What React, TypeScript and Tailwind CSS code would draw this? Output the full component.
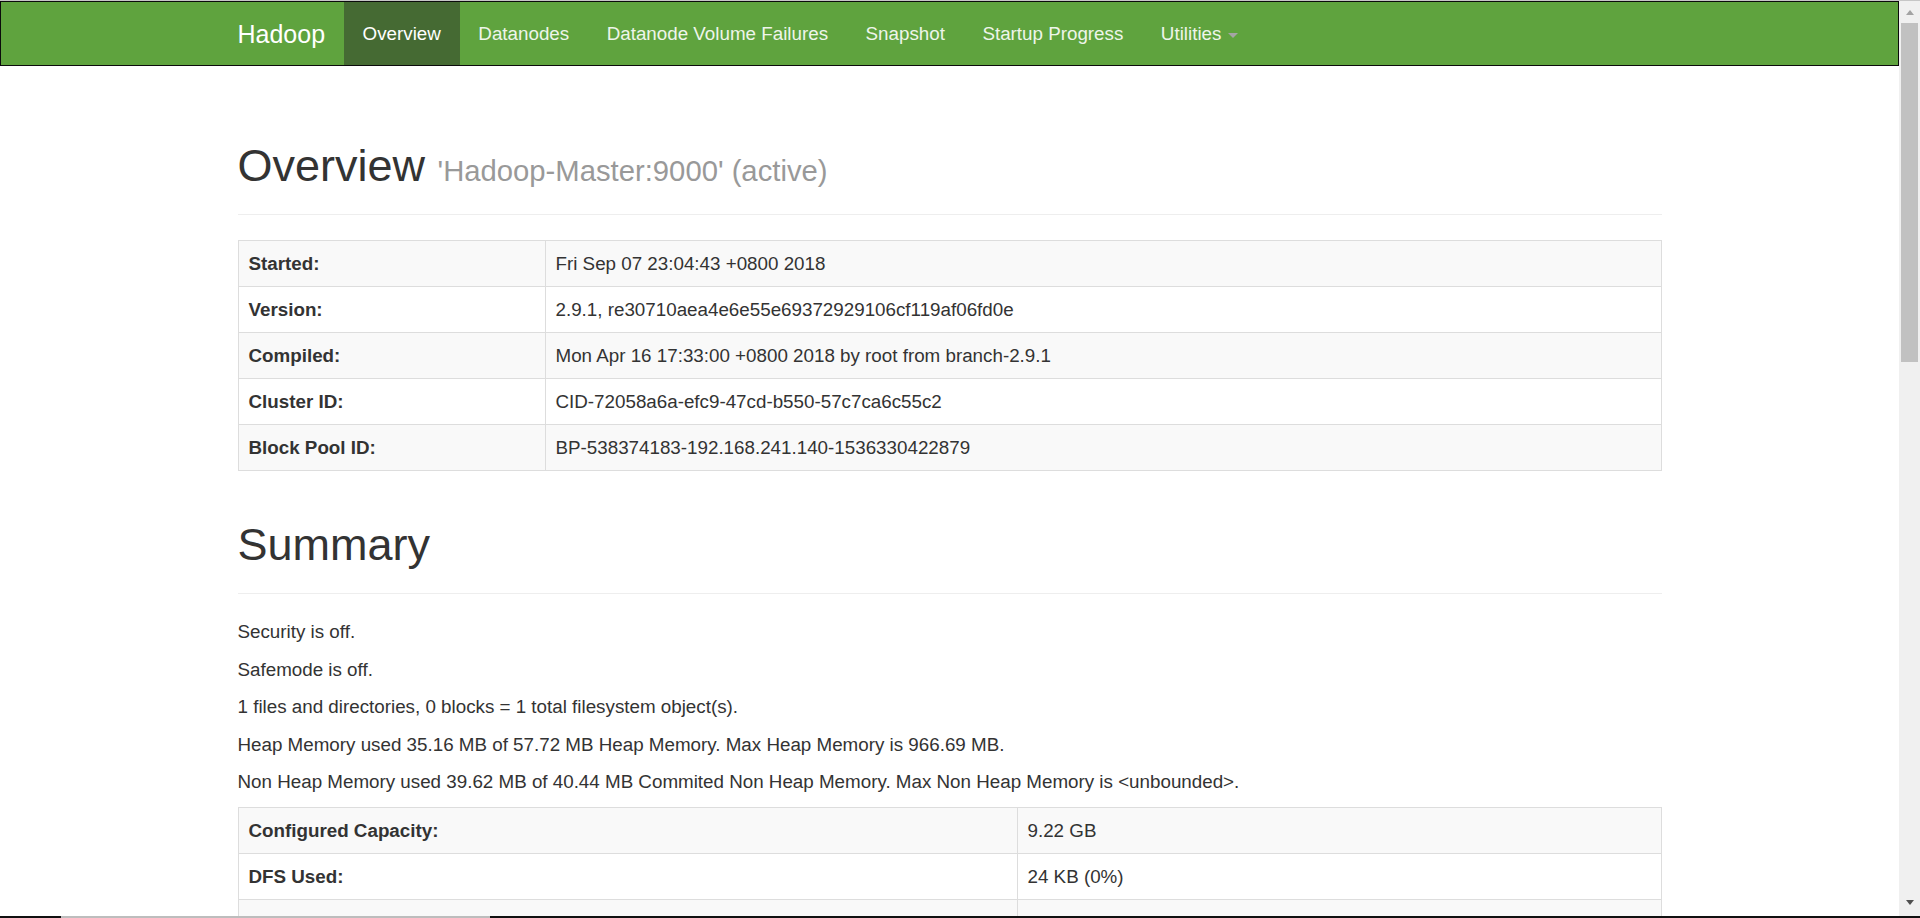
import React from 'react';

const body = "font-['Liberation_Sans','Arial',sans-serif]";
const helv = "font-['Liberation_Sans','Helvetica','Arial',sans-serif]";

const navItems = ['Datanodes', 'Datanode Volume Failures', 'Snapshot', 'Startup Progress'];

const overviewRows: [string, string][] = [
    ['Started:', 'Fri Sep 07 23:04:43 +0800 2018'],
    ['Version:', '2.9.1, re30710aea4e6e55e69372929106cf119af06fd0e'],
    ['Compiled:', 'Mon Apr 16 17:33:00 +0800 2018 by root from branch-2.9.1'],
    ['Cluster ID:', 'CID-72058a6a-efc9-47cd-b550-57c7ca6c55c2'],
    ['Block Pool ID:', 'BP-538374183-192.168.241.140-1536330422879'],
];

const summaryRows: [string, string][] = [
    ['Configured Capacity:', '9.22 GB'],
    ['DFS Used:', '24 KB (0%)'],
    ['Non DFS Used:', '3.11 GB'],
    ['DFS Remaining:', '6.20 GB (67.29%)'],
];

const summaryLines = [
    'Security is off.',
    'Safemode is off.',
    '1 files and directories, 0 blocks = 1 total filesystem object(s).',
    'Heap Memory used 35.16 MB of 57.72 MB Heap Memory. Max Heap Memory is 966.69 MB.',
    'Non Heap Memory used 39.62 MB of 40.44 MB Commited Non Heap Memory. Max Non Heap Memory is <unbounded>.',
];

const InfoTable: React.FC<{ rows: [string, string][]; labelWidth: string }> = ({ rows, labelWidth }) => (
    <table className="w-full border-collapse border border-[#ddd]">
        <tbody>
            {rows.map(([label, val], i) => (
                <tr key={label} className={i % 2 === 0 ? 'bg-[#f9f9f9]' : 'bg-white'}>
                    <th className={`${labelWidth} border border-[#ddd] px-[10px] py-[10px] text-left font-bold leading-[25px]`}>{label}</th>
                    <td className="border border-[#ddd] px-[10px] py-[10px] leading-[25px]">{val}</td>
                </tr>
            ))}
        </tbody>
    </table>
);

const PageHeader: React.FC<{ className: string; children: React.ReactNode }> = ({ className, children }) => (
    <div className={`${className} pb-[11px] border-b border-[#eee] mb-[25px]`}>
        <h1 className={`${helv} h-[49.5px] text-[45px] leading-[49.5px] font-normal text-[#333] mb-[12.5px]`}>{children}</h1>
    </div>
);

const App: React.FC = () => {
    return (
        <div className={`${body} h-[918px] w-[1920px] overflow-hidden flex flex-col bg-white text-[18.8px] text-[#333]`}>
            {/* window top edge */}
            <div className="h-px bg-[#c6c6c6] shrink-0" />

            <div className="flex flex-1 min-h-0">
                <div className="flex-1 min-w-0 overflow-hidden">
                    {/* Navbar */}
                    <nav className="h-[65px] bg-[#5fa33e] border border-[#0b0b0b]">
                        <div className="w-[1424px] mx-auto h-full flex items-stretch">
                            <div className={`${helv} text-[25px] text-white flex items-center pt-[2px] pr-[18.75px]`}>Hadoop</div>
                            <div className="px-[18.75px] pt-[2px] flex items-center bg-[#456a33] text-white">Overview</div>
                            {navItems.map((item) => (
                                <div key={item} className="px-[18.75px] pt-[2px] flex items-center text-[#eef5ea]">{item}</div>
                            ))}
                            <div className="px-[18.75px] pt-[2px] flex items-center text-[#eef5ea]">
                                Utilities
                                <span className="ml-[7px] mt-[2px] w-0 h-0 border-t-[5px] border-t-[#a5a5a5] border-x-[5px] border-x-transparent" />
                            </div>
                        </div>
                    </nav>

                    {/* Content */}
                    <div className="w-[1424px] mx-auto">
                        <PageHeader className="mt-[74.5px]">
                            Overview <small className="text-[29.25px] leading-none text-[#999]">'Hadoop-Master:9000' (active)</small>
                        </PageHeader>

                        <InfoTable rows={overviewRows} labelWidth="w-[307px]" />

                        <PageHeader className="mt-[49.5px]">Summary</PageHeader>

                        {summaryLines.map((line) => (
                            <p key={line} className="leading-[25px] mb-[12.5px]">{line}</p>
                        ))}

                        <InfoTable rows={summaryRows} labelWidth="w-[779px]" />
                    </div>
                </div>

                {/* Scrollbar */}
                <div className="w-[21px] shrink-0 bg-[#f0f0f0] flex flex-col items-center">
                    <div className="h-[22px] flex items-center justify-center">
                        <span className="w-0 h-0 border-b-[5px] border-b-[#a3a3a3] border-x-[4px] border-x-transparent" />
                    </div>
                    <div className="w-[17px] h-[339px] bg-[#c1c1c1]" />
                    <div className="flex-1" />
                    <div className="h-[16px] flex items-start justify-center">
                        <span className="w-0 h-0 border-t-[5px] border-t-[#505050] border-x-[4px] border-x-transparent" />
                    </div>
                </div>
            </div>

            {/* window bottom edge */}
            <div className="h-[2px] shrink-0 flex">
                <div className="w-[61px] bg-[#111]" />
                <div className="w-[429px] bg-[#bdbdbd]" />
                <div className="flex-1 bg-[#111]" />
            </div>
        </div>
    );
};

export default App;
